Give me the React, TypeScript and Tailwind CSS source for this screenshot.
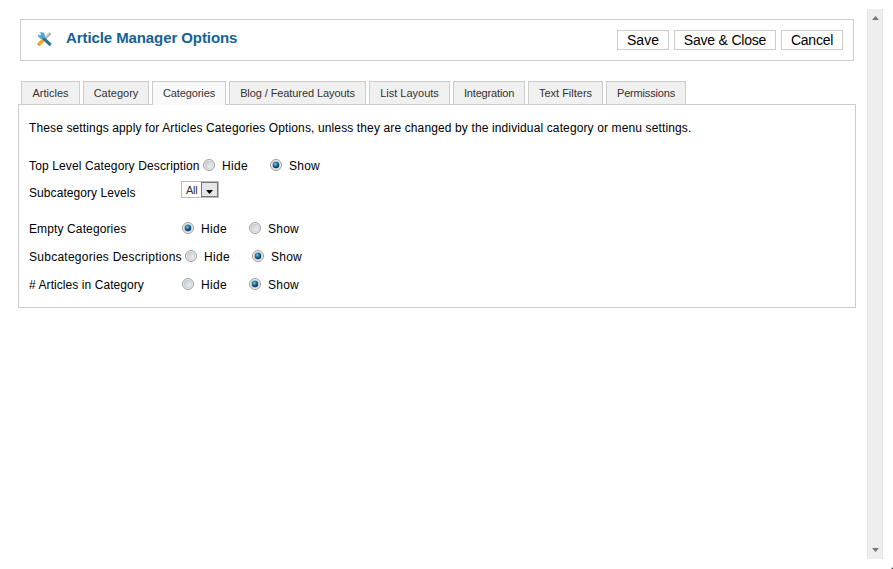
import React from "react";

const font = "font-['Liberation_Sans',Arial,sans-serif]";

const tabs = [
  { label: "Articles", width: "w-[59px]" },
  { label: "Category", width: "w-[66px]" },
  { label: "Categories", width: "w-[74px] tracking-[-0.1px]", active: true },
  { label: "Blog / Featured Layouts", width: "w-[137px] tracking-[-0.09px]" },
  { label: "List Layouts", width: "w-[81px]" },
  { label: "Integration", width: "w-[72px] tracking-[-0.16px]" },
  { label: "Text Filters", width: "w-[75px]" },
  { label: "Permissions", width: "w-[80px] tracking-[-0.17px]" },
];

function ToolsIcon() {
  return (
    <svg className="mt-3 ml-4 h-[14px] w-[15px] shrink-0" viewBox="0 0 15 14">
      <path d="M13.4 .9L8 6.3" stroke="#c2c2c2" strokeWidth="2.6" />
      <path d="M14 1.6L9.2 6.4" stroke="#8a8d90" strokeWidth=".8" />
      <path d="M7.4 7L2.2 12" stroke="#f9a51c" strokeWidth="3.5" strokeLinecap="round" />
      <path d="M.9 11.9l1.7 1.5" stroke="#b98a45" strokeWidth=".9" />
      <path d="M5 4.8L12.7 12.1" stroke="#2f7096" strokeWidth="3.2" strokeLinecap="round" />
      <path d="M.8 2.6L3 3.6 4.2 2.4 2.9 .4Q6.8 -.4 7.9 2.7L7.6 5.6 5.2 7Q1 6.6 .8 2.6Z" fill="#4aa3d1" />
    </svg>
  );
}

function Button({ label, className }: { label: string; className: string }) {
  return (
    <button className={`flex h-5 items-center justify-center border border-[#ccc] bg-white text-[14px] leading-[18px] whitespace-nowrap text-black ${className}`}>
      {label}
    </button>
  );
}

function Radio({ checked }: { checked?: boolean }) {
  return (
    <svg className="h-[13px] w-[13px] shrink-0" viewBox="0 0 13 13">
      <defs>
        <linearGradient id="well" x1="0" y1="0" x2="1" y2="1">
          <stop offset="0" stopColor="#c4c8cc" />
          <stop offset="1" stopColor="#f6f6f6" />
        </linearGradient>
        <radialGradient id="dot" cx=".4" cy=".35" r=".65">
          <stop offset="0" stopColor="#7ccdee" />
          <stop offset=".5" stopColor="#1e6e9e" />
          <stop offset="1" stopColor="#0b2f52" />
        </radialGradient>
      </defs>
      <circle cx="6" cy="6" r="5.5" fill="#f6f6f6" stroke="#8e8f8f" strokeWidth=".9" />
      <circle cx="6" cy="6" r="3.9" fill="url(#well)" stroke="#bcc0c4" strokeWidth=".6" />
      {checked && <circle cx="6" cy="6" r="3.2" fill="url(#dot)" />}
    </svg>
  );
}

function RadioRow({ label, labelClass, value }: { label: string; labelClass: string; value: "Hide" | "Show" }) {
  return (
    <div className="flex h-7 items-center">
      <span className={`shrink-0 pt-[2px] whitespace-nowrap ${labelClass}`}>{label}</span>
      <Radio checked={value === "Hide"} />
      <span className="ml-[6px] w-12 pt-[2px] tracking-[0.3px]">Hide</span>
      <Radio checked={value === "Show"} />
      <span className="ml-[6px] pt-[2px] tracking-[0.25px]">Show</span>
    </div>
  );
}

export default function App() {
  return (
    <div className={`flex h-[569px] w-[893px] overflow-hidden bg-white text-black ${font}`}>
      <main className="w-[867px] shrink-0 pt-[19px] pl-[18px]">
        <header className="ml-[2px] flex h-[42px] w-[834px] items-start border border-[#ccc]">
          <ToolsIcon />
          <h1 className="mt-[9px] ml-[14px] text-[15px] leading-[18px] font-bold tracking-[-0.09px] whitespace-nowrap text-[#146295]">
            Article Manager Options
          </h1>
          <div className="mt-[10px] mr-[10px] ml-auto flex gap-[5px]">
            <Button label="Save" className="w-[52px]" />
            <Button label="Save & Close" className="w-[102px] tracking-[-0.2px]" />
            <Button label="Cancel" className="w-[62px] tracking-[-0.25px]" />
          </div>
        </header>

        <nav className="relative z-10 mt-5 ml-[3px] flex h-[23px] items-start gap-[3px]">
          {tabs.map((t) => (
            <div
              key={t.label}
              className={`flex shrink-0 justify-center border border-b-0 border-[#ccc] pt-[4px] text-[11px] leading-[15px] whitespace-nowrap text-[#333] ${t.width} ${
                t.active ? "h-6 bg-[#f9f9f9]" : "h-[23px] bg-[#f0f0f0]"
              }`}
            >
              {t.label}
            </div>
          ))}
        </nav>

        <section className="h-[204px] w-[838px] border border-[#ccc] pl-[10px] text-[12px] leading-[15px]">
          <p className="mt-[16px] tracking-[0.126px] whitespace-nowrap">
            These settings apply for Articles Categories Options, unless they are changed by the individual category or menu settings.
          </p>
          <div className="mt-[15px]">
            <RadioRow label="Top Level Category Description" labelClass="w-[174px] tracking-[0.13px]" value="Show" />
          </div>
          <div className="flex h-[35px] items-start">
            <span className="mt-[7px] w-[152px] shrink-0 tracking-[0.07px]">Subcategory Levels</span>
            <div className="mt-[2px] flex h-[17px] w-[38px] border border-[#bbb]">
              <span className="w-[19px] pl-1 text-[11px] leading-[16px] tracking-[-0.3px] text-[#333]">All</span>
              <span className="flex h-[15px] w-[17px] items-center justify-center border border-[#777] bg-[#e4e4e4]">
                <svg className="mt-[5px] h-1 w-[7px]" viewBox="0 0 7 4">
                  <path d="M0 0H7L3.5 4Z" fill="#000" />
                </svg>
              </span>
            </div>
          </div>
          <RadioRow label="Empty Categories" labelClass="w-[153px] tracking-[0.12px]" value="Hide" />
          <RadioRow label="Subcategories Descriptions" labelClass="w-[156px] tracking-[0.26px]" value="Show" />
          <RadioRow label="# Articles in Category" labelClass="w-[153px] tracking-[0.07px]" value="Show" />
        </section>
      </main>

      <aside className="mt-[9px] flex h-[550px] w-4 shrink-0 flex-col items-center justify-between border-x border-[#e4e4e4] bg-[#eee] py-[7px]">
        <svg className="h-1 w-[7px]" viewBox="0 0 7 4">
          <path d="M3.5 0L7 4H0Z" fill="#777" />
        </svg>
        <svg className="h-1 w-[7px]" viewBox="0 0 7 4">
          <path d="M0 0H7L3.5 4Z" fill="#777" />
        </svg>
      </aside>
      <svg className="mt-auto ml-auto h-[2px] w-[2px]" viewBox="0 0 2 2">
        <path d="M2 0V2H0Z" fill="#555" />
      </svg>
    </div>
  );
}
